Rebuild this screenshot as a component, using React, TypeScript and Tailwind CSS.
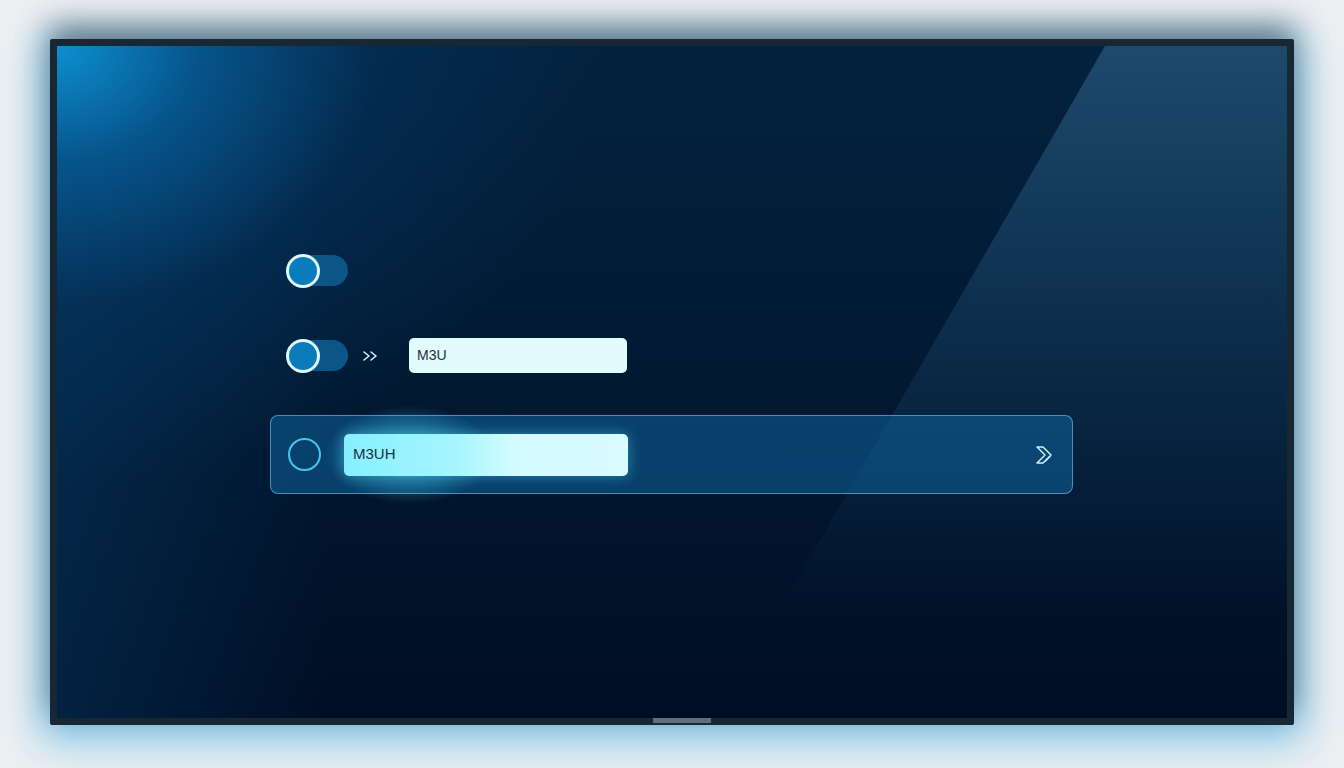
import { useState } from "react";

// Small pill switch, knob sits on the left edge
function Toggle() {
    return (
        <div className="relative h-[31px] w-[61px] rounded-full bg-[#0b5687]">
            <div className="absolute -left-[1px] top-1/2 h-[34px] w-[34px] -translate-y-1/2 rounded-full border-[3px] border-[#dff8ff] bg-[#0a7cbc]" />
        </div>
    );
}

function DoubleArrow() {
    return (
        <svg width="17" height="12" viewBox="0 0 17 12" fill="none">
            <polyline points="2,2 7,6 2,10" stroke="#d6f2ff" strokeWidth="1.6" strokeLinecap="round" strokeLinejoin="round" />
            <polyline points="9,2 14,6 9,10" stroke="#d6f2ff" strokeWidth="1.6" strokeLinecap="round" strokeLinejoin="round" />
        </svg>
    );
}

function ChevronBadge() {
    return (
        <svg width="20" height="20" viewBox="0 0 20 20" fill="none">
            <polygon points="2,2 8,2 16,10 8,18 2,18 10,10" stroke="#c9f1ff" strokeWidth="1.5" strokeLinejoin="round" />
            <line x1="10.5" y1="16" x2="15" y2="11.5" stroke="#c9f1ff" strokeWidth="1.3" strokeLinecap="round" />
        </svg>
    );
}

export default function App() {
    const [value] = useState("M3U");
    const [focused] = useState("M3UH");

    return (
        <div className="flex min-h-[768px] w-full justify-center bg-[#edf0f2] pt-[39px] font-['Liberation_Sans',Arial,sans-serif]">
            <div className="relative h-[686px] w-[1244px] rounded-[2px] border-[7px] border-[#172734] bg-[#172734] shadow-[0_-14px_30px_rgba(25,35,45,0.5),0_10px_46px_10px_rgba(70,175,230,0.45),0_0_30px_6px_rgba(90,185,235,0.35)]">
                {/* screen */}
                <div className="relative h-full w-full overflow-hidden bg-[radial-gradient(ellipse_640px_520px_at_0_0,#0d8fd0_0%,rgba(7,95,155,0.8)_22%,rgba(4,55,100,0.45)_50%,rgba(3,40,75,0)_85%),linear-gradient(to_right,rgba(8,70,120,0.35),rgba(3,30,60,0)_22%),linear-gradient(to_bottom,#03223f,#021a33_45%,#000e24)]">
                    {/* glass reflection */}
                    <div className="pointer-events-none absolute inset-0 [clip-path:polygon(85.2%_0,100%_0,100%_100%,53.7%_100%)] bg-[linear-gradient(to_bottom,rgba(90,165,210,0.3),rgba(60,140,200,0.15)_45%,rgba(20,60,110,0)_85%)]" />

                    <div className="relative ml-[213px] flex w-[803px] flex-col pt-[209px]">
                        <div className="pl-[17px]">
                            <Toggle />
                        </div>

                        <div className="mt-[52px] flex h-[35px] items-center pl-[17px]">
                            <Toggle />
                            <div className="ml-[14px]">
                                <DoubleArrow />
                            </div>
                            <div className="ml-[30px] flex h-[35px] w-[218px] items-center rounded-[5px] bg-[#e1fbff] pl-[8px] text-[14px] text-[#1f2f3c]">
                                {value}
                            </div>
                        </div>

                        <div className="mt-[42px] flex h-[79px] items-center rounded-[8px] border border-[rgba(120,195,240,0.6)] bg-[rgba(14,105,165,0.5)] pl-[17px] pr-[17px]">
                            <div className="h-[33px] w-[33px] rounded-full border-[2.5px] border-[#45c6ee]" />
                            <div className="relative ml-[23px]">
                                <div className="absolute -left-[20px] top-1/2 h-[100px] w-[170px] -translate-y-1/2 rounded-full bg-[radial-gradient(ellipse_at_center,rgba(80,225,255,0.6),rgba(80,225,255,0)_70%)]" />
                                <div className="relative flex h-[42px] w-[284px] items-center rounded-[5px] bg-[linear-gradient(to_right,#86efff,#a6f6ff_40%,#d3fbff_60%,#d8fbff)] pl-[9px] text-[15px] text-[#17303f] shadow-[0_0_14px_rgba(90,220,255,0.45)]">
                                    {focused}
                                </div>
                            </div>
                            <div className="ml-auto">
                                <ChevronBadge />
                            </div>
                        </div>
                    </div>
                </div>
                {/* stand notch */}
                <div className="absolute -bottom-[5px] left-1/2 h-[5px] w-[58px] -translate-x-[19px] rounded-b-[1px] bg-[#5f707a]" />
            </div>
        </div>
    );
}
